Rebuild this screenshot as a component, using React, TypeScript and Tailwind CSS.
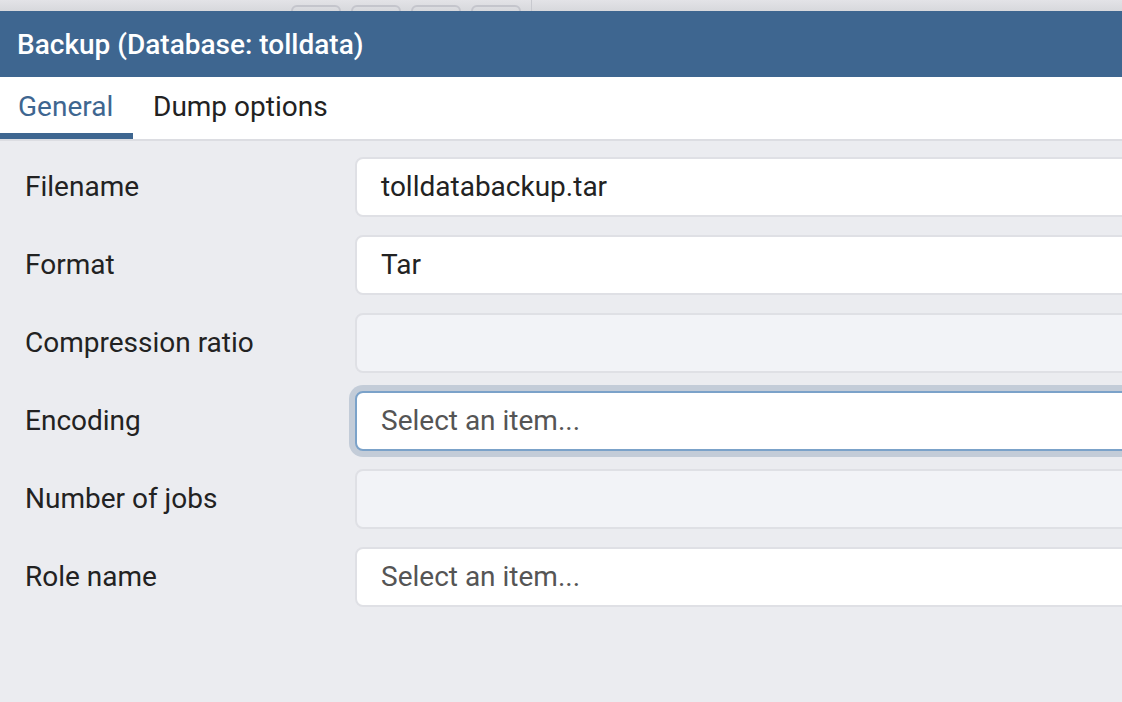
import React from "react";

const rows: { label: string; value?: string; placeholder?: string; disabled?: boolean; focused?: boolean }[] = [
  { label: "Filename", value: "tolldatabackup.tar" },
  { label: "Format", value: "Tar" },
  { label: "Compression ratio", disabled: true },
  { label: "Encoding", placeholder: "Select an item...", focused: true },
  { label: "Number of jobs", disabled: true },
  { label: "Role name", placeholder: "Select an item..." },
];

export default function App() {
  return (
    <div
      className="w-[1122px] h-[702px] overflow-hidden bg-[#ebecf0] flex flex-col"
      style={{ fontFamily: "Roboto, 'Noto Sans', sans-serif" }}
    >
      {/* background toolbar strip */}
      <div className="h-[11px] shrink-0 bg-gradient-to-b from-[#e3e3e7] to-[#d7d8dc] flex overflow-hidden">
        <div className="flex gap-[10px] pl-[291px] pt-[5px]">
          <div className="w-[50px] h-[20px] rounded-[6px] border-2 border-[#c4c5cc]" />
          <div className="w-[50px] h-[20px] rounded-[6px] border-2 border-[#c4c5cc]" />
          <div className="w-[50px] h-[20px] rounded-[6px] border-2 border-[#c4c5cc]" />
          <div className="w-[50px] h-[20px] rounded-[6px] border-2 border-[#c4c5cc]" />
        </div>
        <div className="ml-[10px] w-px bg-[#c8c9cf]" />
      </div>

      {/* header */}
      <div className="h-[66px] shrink-0 bg-[#3e6690] flex items-center pl-[17px] pt-[2px]">
        <span className="text-white text-[28px] font-medium leading-none">Backup (Database: tolldata)</span>
      </div>

      {/* tabs */}
      <div className="h-[64px] shrink-0 bg-white border-b-2 border-[#dcdde2] flex">
        <div className="w-[133px] flex flex-col">
          <div className="flex-1 flex items-center pl-[18px] pt-[3px] text-[28px] leading-none text-[#3e6690]">General</div>
          <div className="h-[6px] bg-[#3e6690]" />
        </div>
        <div className="flex items-center pl-[20px] pb-[3px] text-[28px] leading-none text-[#222]">Dump options</div>
      </div>

      {/* form */}
      <div className="pt-[16px] flex flex-col gap-[18px] w-[1160px]">
        {rows.map((r) => (
          <div key={r.label} className="flex items-center h-[60px]">
            <div className="w-[355px] shrink-0 pl-[25px] text-[28px] leading-none text-[#222]">{r.label}</div>
            <div
              className={
                "flex-1 h-[60px] rounded-[8px] border-2 flex items-center pl-[24px] text-[28px] leading-none " +
                (r.focused
                  ? "bg-white border-[#7ba2c9] shadow-[0_0_0_6px_#c3ccd8]"
                  : r.disabled
                  ? "bg-[#f2f3f7] border-[#dfe0e5]"
                  : "bg-white border-[#dfe0e5]")
              }
            >
              {r.value ? (
                <span className="text-[#222]">{r.value}</span>
              ) : r.placeholder ? (
                <span className="text-[#555]">{r.placeholder}</span>
              ) : null}
            </div>
          </div>
        ))}
      </div>
    </div>
  );
}
